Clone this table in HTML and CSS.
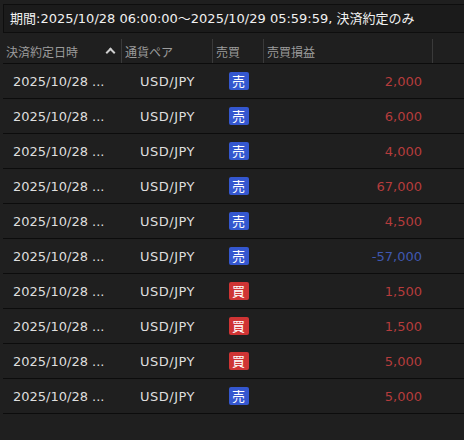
FILE: index.html
```html
<!DOCTYPE html>
<html lang="ja">
<head>
    <meta charset="UTF-8">
    <title>決済約定一覧</title>
    <link rel="stylesheet" href="styles.css">
</head>
<body>

    <div class="period">期間:2025/10/28 06:00:00～2025/10/29 05:59:59, 決済約定のみ</div>

    <div class="trade-table">
        <div class="head-row">
            <div class="head-cell sortable">
                <span>決済約定日時</span>
                <span class="sort-icon"></span>
            </div>
            <div class="head-cell">通貨ペア</div>
            <div class="head-cell">売買</div>
            <div class="head-cell">売買損益</div>
            <div class="head-cell"></div>
        </div>

        <div class="row">
            <div class="cell date">2025/10/28 ...</div>
            <div class="cell pair">USD/JPY</div>
            <div class="cell side"><span class="badge sell">売</span></div>
            <div class="cell pl plus">2,000</div>
        </div>
        <div class="row">
            <div class="cell date">2025/10/28 ...</div>
            <div class="cell pair">USD/JPY</div>
            <div class="cell side"><span class="badge sell">売</span></div>
            <div class="cell pl plus">6,000</div>
        </div>
        <div class="row">
            <div class="cell date">2025/10/28 ...</div>
            <div class="cell pair">USD/JPY</div>
            <div class="cell side"><span class="badge sell">売</span></div>
            <div class="cell pl plus">4,000</div>
        </div>
        <div class="row">
            <div class="cell date">2025/10/28 ...</div>
            <div class="cell pair">USD/JPY</div>
            <div class="cell side"><span class="badge sell">売</span></div>
            <div class="cell pl plus">67,000</div>
        </div>
        <div class="row">
            <div class="cell date">2025/10/28 ...</div>
            <div class="cell pair">USD/JPY</div>
            <div class="cell side"><span class="badge sell">売</span></div>
            <div class="cell pl plus">4,500</div>
        </div>
        <div class="row">
            <div class="cell date">2025/10/28 ...</div>
            <div class="cell pair">USD/JPY</div>
            <div class="cell side"><span class="badge sell">売</span></div>
            <div class="cell pl minus">-57,000</div>
        </div>
        <div class="row">
            <div class="cell date">2025/10/28 ...</div>
            <div class="cell pair">USD/JPY</div>
            <div class="cell side"><span class="badge buy">買</span></div>
            <div class="cell pl plus">1,500</div>
        </div>
        <div class="row">
            <div class="cell date">2025/10/28 ...</div>
            <div class="cell pair">USD/JPY</div>
            <div class="cell side"><span class="badge buy">買</span></div>
            <div class="cell pl plus">1,500</div>
        </div>
        <div class="row">
            <div class="cell date">2025/10/28 ...</div>
            <div class="cell pair">USD/JPY</div>
            <div class="cell side"><span class="badge buy">買</span></div>
            <div class="cell pl plus">5,000</div>
        </div>
        <div class="row">
            <div class="cell date">2025/10/28 ...</div>
            <div class="cell pair">USD/JPY</div>
            <div class="cell side"><span class="badge sell">売</span></div>
            <div class="cell pl plus">5,000</div>
        </div>
    </div>

</body>
</html>
```

FILE: styles.css
```css
    body {
        margin: 0;
        padding: 0;
        font-family: 'DejaVu Sans', 'Noto Sans CJK JP', sans-serif;
        background-color: #1f1f1f;
        color: #e6e6e6;
        height: 440px;
        overflow: hidden;
    }
    .period {
        margin: 4px 0 0 3px;
        height: 27px;
        line-height: 27px;
        padding-left: 6px;
        background-color: #1b1b1b;
        border: 1px solid #0e0e0e;
        border-right: none;
        font-size: 13px;
        color: #f0f0f0;
        white-space: nowrap;
    }

    .trade-table {
        margin: 4px 0 0 3px;
    }
    .head-row, .row {
        display: grid;
        grid-template-columns: 119px 91px 51px 169px 1fr;
    }
    .head-row {
        height: 24px;
        padding-top: 2px;
        border-bottom: 1px solid #0c0c0c;
    }
    .head-cell {
        display: flex;
        align-items: center;
        padding-left: 3px;
        font-size: 12px;
        color: #9c9c9c;
        border-right: 1px solid #3a3a3a;
    }
    .head-cell:last-child {
        border-right: none;
    }
    .sortable {
        justify-content: space-between;
        padding-right: 7px;
    }
    /* chevron drawn with two borders */
    .sort-icon {
        width: 5px;
        height: 5px;
        margin-top: 3px;
        border-left: 2px solid #cfcfcf;
        border-top: 2px solid #cfcfcf;
        transform: rotate(45deg);
    }
    .row {
        height: 34px;
        border-bottom: 1px solid #0c0c0c;
        font-size: 13px;
    }
    .cell {
        display: flex;
        align-items: center;
    }
    .date {
        padding-left: 10px;
        color: #dedede;
    }
    .pair {
        justify-content: center;
        color: #dedede;
        letter-spacing: 0.5px;
    }
    .side {
        justify-content: center;
    }
    .badge {
        display: inline-block;
        width: 20px;
        height: 18px;
        line-height: 18px;
        text-align: center;
        border-radius: 2px;
        font-size: 13px;
        color: #fff;
        font-family: 'Noto Sans CJK JP', sans-serif;
    }
    .sell {
        background-color: #3457cf;
    }
    .buy {
        background-color: #cf3434;
    }
    .pl {
        justify-content: flex-end;
        padding-right: 11px;
    }
    .plus {
        color: #b53c3c;
    }
    .minus {
        color: #3f58b0;
    }
```
